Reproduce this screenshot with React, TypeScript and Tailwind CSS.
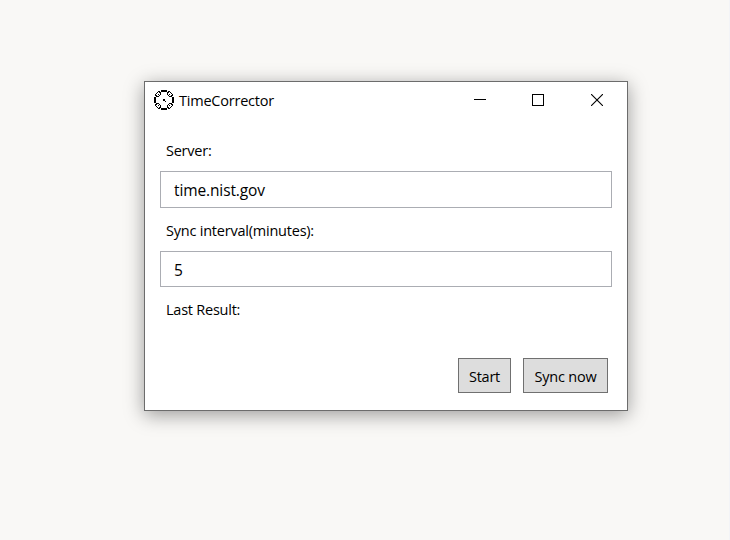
import React from "react";

function ClockIcon() {
  const quarter = (
    <path d="M7 0h3v2H7zM4 1h2v1H4zM3 2h1v1H3zM5 2h2v1H5zM2 3h1v1H2zM6 3h1v2H6zM1 4h1v2H1zM4 4h1v1H4zM5 5h1v1H5zM2 5h1v2H2zM3 6h2v1H3zM0 7h2v3H0z" />
  );
  return (
    <svg width="20" height="20" viewBox="0 0 20 20" shapeRendering="crispEdges" fill="#000">
      {quarter}
      <g transform="translate(20 0) scale(-1 1)">{quarter}</g>
      <g transform="translate(0 20) scale(1 -1)">{quarter}</g>
      <g transform="translate(20 20) scale(-1 -1)">{quarter}</g>
      <path d="M9 9h2v2H9zM11 11h1v1h-1z" />
    </svg>
  );
}

function TitleBar() {
  return (
    <header className="flex h-[36px] items-center justify-between">
      <div className="flex items-center pl-[9px]">
        <ClockIcon />
        <h1 className="ml-[5px] pt-[2px] text-[14.5px] leading-5 tracking-[-0.22px]">TimeCorrector</h1>
      </div>
      <div className="flex items-center gap-[46px] pr-[24px]">
        <button aria-label="Minimize">
          <svg className="block" width="12" height="12" shapeRendering="crispEdges"><path d="M0 5h12v1H0z" /></svg>
        </button>
        <button aria-label="Maximize">
          <svg className="block" width="12" height="12" fill="none" stroke="#000" shapeRendering="crispEdges"><path d="M.5.5h11v11H.5z" /></svg>
        </button>
        <button aria-label="Close" className="ml-px">
          <svg className="block" width="12" height="12" fill="none" stroke="#000" strokeWidth="1.1"><path d="M0 0l12 12M12 0L0 12" /></svg>
        </button>
      </div>
    </header>
  );
}

export default function App() {
  return (
    <main className="flex h-[540px] w-[730px] border-r border-[#f3f4f7] bg-[#f9f8f6] pt-[81px] pl-[144px] font-['Open_Sans','Noto_Sans',sans-serif] text-black">
      <section className="h-[330px] w-[484px] border border-[#6c6c6c] bg-white shadow-[0_4px_18px_rgba(0,0,0,0.38)]">
        <TitleBar />
        <div className="flex flex-col pr-[15px] pl-[15px]">
          <label htmlFor="server" className="mt-[23px] ml-[6px] h-5 text-[14.5px] leading-5 tracking-[-0.24px]">Server:</label>
          <input id="server" defaultValue="time.nist.gov" className="mt-[10px] h-[37px] w-[452px] border border-[#abadb3] bg-white px-[13px] text-[15.5px] tracking-[-0.12px] outline-none" />
          <label htmlFor="interval" className="mt-[13px] ml-[6px] h-5 text-[14.5px] leading-5 tracking-[-0.22px]">Sync interval(minutes):</label>
          <input id="interval" defaultValue="5" className="mt-[10px] h-[36px] w-[452px] border border-[#abadb3] bg-white px-[13px] pt-px text-[15.5px] outline-none" />
          <p className="mt-[13px] ml-[6px] h-5 text-[14.5px] leading-5 tracking-[-0.24px]">Last Result:</p>
          <div className="mt-[38px] flex justify-end gap-3 pr-[4px]">
            <button className="h-[35px] w-[53px] border border-[#707070] bg-[#ddd] pt-[2px] text-[14.5px] tracking-[-0.24px]">Start</button>
            <button className="h-[35px] w-[85px] border border-[#707070] bg-[#ddd] pt-[2px] text-[14.5px] tracking-[-0.2px]">Sync now</button>
          </div>
        </div>
      </section>
    </main>
  );
}
